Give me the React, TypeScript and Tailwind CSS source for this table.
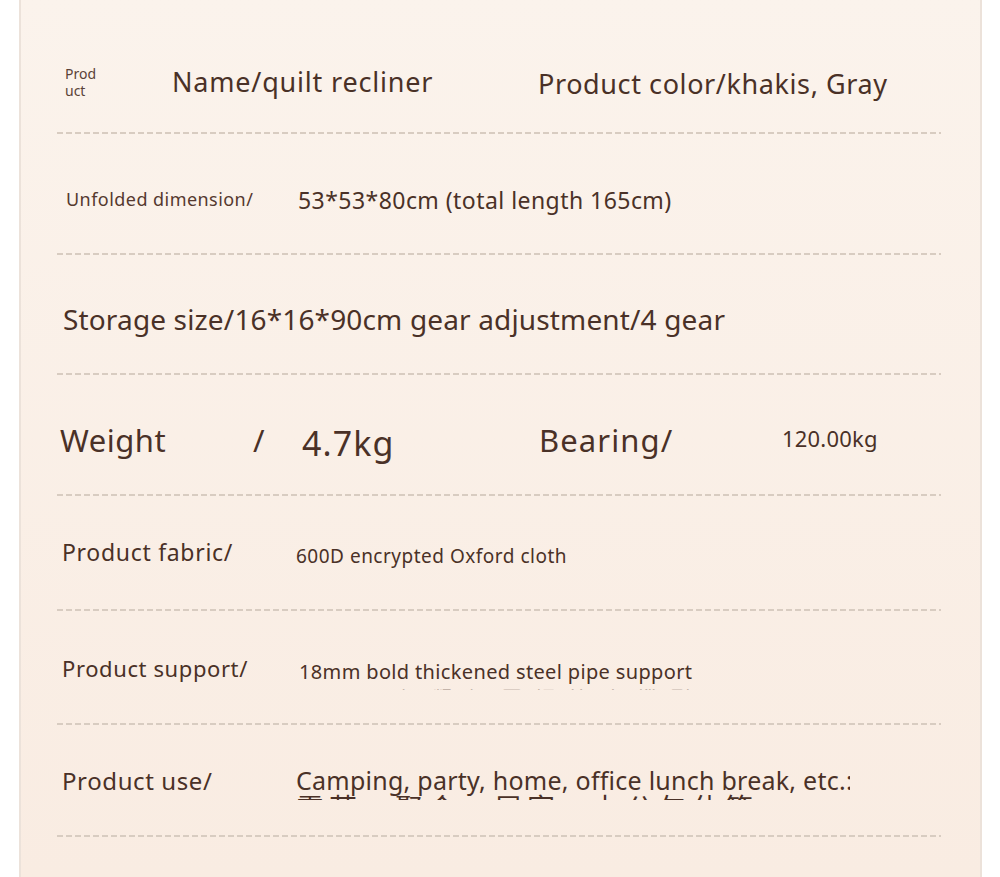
const line =
  "h-[2px] w-full bg-[repeating-linear-gradient(90deg,#d8ccc1_0_6px,transparent_6px_9px)]";

function Dashed() {
  return <div className={line} />;
}

export default function App() {
  return (
    <div className="h-[877px] w-full bg-white font-['Noto_Sans',sans-serif] text-[#4a3127]">
      <div className="ml-[19px] mr-[18px] h-full border-x-2 border-[#ece2da] bg-gradient-to-b from-[#fbf3ec] to-[#f9ece2] pl-[36px] pr-[39px]">
        {/* row 1 */}
        <div className="pt-[52px]">
          <div className="flex h-[60px] items-center">
            <div className="ml-[8px] w-[107px] text-[14px] leading-[17px] text-[#5a4238]">
              Prod
              <br />
              uct
            </div>
            <div className="w-[366px] text-[27px] tracking-[0.8px]">Name/quilt recliner</div>
            <div className="mt-[4px] text-[27px] tracking-[0.6px]">Product color/khakis, Gray</div>
          </div>
          <div className="mt-[20px]">
            <Dashed />
          </div>
        </div>

        {/* row 2 */}
        <div className="pt-[35px]">
          <div className="flex h-[60px] items-center">
            <div className="ml-[9px] w-[232px] text-[18px] tracking-[0.45px] text-[#55392f]">
              Unfolded dimension/
            </div>
            <div className="mt-[3px] text-[23px] tracking-[0.45px]">
              53*53*80cm (total length 165cm)
            </div>
          </div>
          <div className="mt-[24px]">
            <Dashed />
          </div>
        </div>

        {/* row 3 */}
        <div className="pt-[34px]">
          <div className="flex h-[60px] items-center">
            <div className="ml-[6px] text-[28px] tracking-[0.15px]">
              Storage size/16*16*90cm gear adjustment/4 gear
            </div>
          </div>
          <div className="mt-[24px]">
            <Dashed />
          </div>
        </div>

        {/* row 4 */}
        <div className="pt-[35px]">
          <div className="flex h-[60px] items-center">
            <div className="ml-[3px] w-[193px] text-[31px] tracking-[0.5px]">Weight</div>
            <div className="w-[49px] text-[31px]">/</div>
            <div className="mt-[6px] w-[237px] text-[34px] tracking-[1.1px]">4.7kg</div>
            <div className="w-[243px] text-[31px] tracking-[1.1px]">Bearing/</div>
            <div className="-mt-[3px] text-[22px] tracking-[0.2px]">120.00kg</div>
          </div>
          <div className="mt-[24px]">
            <Dashed />
          </div>
        </div>

        {/* row 5 */}
        <div className="pt-[26px]">
          <div className="flex h-[60px] items-center">
            <div className="ml-[5px] w-[234px] text-[23px] tracking-[0.7px]">Product fabric/</div>
            <div className="mt-[8px] text-[19px] tracking-[0.5px]">600D encrypted Oxford cloth</div>
          </div>
          <div className="mt-[27px]">
            <Dashed />
          </div>
        </div>

        {/* row 6 */}
        <div className="pt-[28px]">
          <div className="flex h-[60px] items-center">
            <div className="ml-[5px] -mt-[2px] w-[237px] text-[22px] tracking-[0.6px]">
              Product support/
            </div>
            <div className="mt-[6px] flex flex-col">
              <div className="text-[20px] leading-[34px] tracking-[0.35px]">
                18mm bold thickened steel pipe support
              </div>
              <div className="h-[1px] overflow-hidden pl-[100px] font-['Noto_Sans_CJK_SC',sans-serif] text-[20px] leading-[20px] tracking-[14px] opacity-30">
                <div className="-mt-[1px] whitespace-nowrap">加粗加厚钢管支撑耐用</div>
              </div>
            </div>
          </div>
          <div className="mt-[24px]">
            <Dashed />
          </div>
        </div>

        {/* row 7 */}
        <div className="pt-[25px]">
          <div className="flex h-[60px] items-center">
            <div className="ml-[5px] mt-[4px] flex w-[234px] flex-col">
              <div className="text-[24px] leading-[34px] tracking-[0.6px]">Product use/</div>
              <div className="h-[2px] overflow-hidden font-['Noto_Sans_CJK_SC',sans-serif] text-[22px] leading-[22px] tracking-[8px] opacity-40">
                <div className="whitespace-nowrap">产品用途说明</div>
              </div>
            </div>
            <div className="mt-[7px] flex w-[554px] flex-col overflow-hidden">
              <div className="whitespace-nowrap text-[25px] leading-[26px] tracking-[0.25px]">
                Camping, party, home, office lunch break, etc.:
              </div>
              <div className="h-[7px] overflow-hidden font-['Noto_Sans_CJK_SC',sans-serif] text-[28px] leading-[28px] tracking-[5px]">
                <div className="whitespace-nowrap">露营、聚会、居家、办公午休等：</div>
              </div>
            </div>
          </div>
          <div className="mt-[25px]">
            <Dashed />
          </div>
        </div>
      </div>
    </div>
  );
}
